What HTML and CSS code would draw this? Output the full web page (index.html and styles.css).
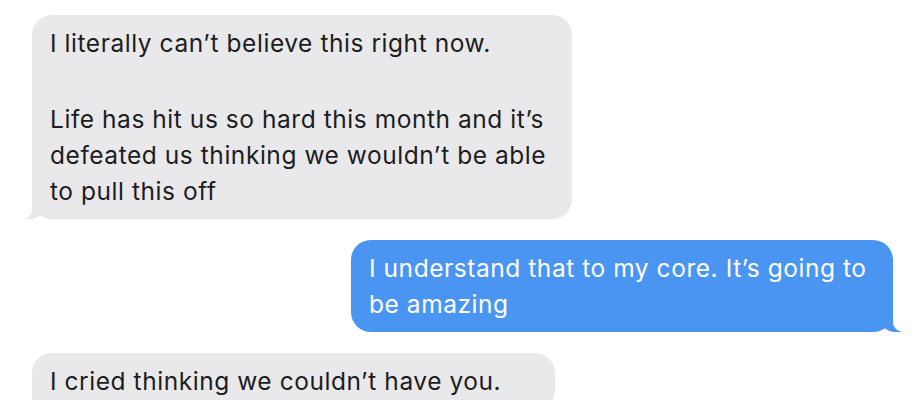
FILE: index.html
```html
<!DOCTYPE html>
<html>
<head>
<meta charset="utf-8">
<link rel="stylesheet" href="styles.css">
</head>
<body>
<div class="thread">
  <div class="bubble received">
    <p class="para">I literally can’t believe this right now.</p>
    <p class="para">Life has hit us so hard this month and it’s defeated us thinking we wouldn’t be able to pull this off</p>
  </div>
  <div class="bubble sent">
    <p class="para">I understand that to my core. It’s going to be amazing</p>
  </div>
  <div class="bubble received narrow">
    <p class="para">I cried thinking we couldn’t have you.</p>
  </div>
</div>
</body>
</html>
```
FILE: styles.css
```css
html, body {
  margin: 0;
  padding: 0;
  background: #ffffff;
  overflow: hidden;
}
.thread {
  display: flex;
  flex-direction: column;
  gap: 21px;
  padding: 15px 31px 0 32px;
  font-family: Inter, "Noto Sans", sans-serif;
  font-size: 24.5px;
  letter-spacing: 0.55px;
  line-height: 36px;
}
.bubble {
  position: relative;
  box-sizing: border-box;
  width: 540px;
  padding: 10px 18px 10px;
  border-radius: 20px;
}
.para {
  margin: 0;
}
.para + .para {
  margin-top: 40px;
}
.received {
  align-self: flex-start;
  background: #e9e9eb;
  color: #1d1d1f;
}
.sent {
  align-self: flex-end;
  width: 542px;
  background: #4b95f2;
  color: #ffffff;
}
.narrow {
  width: 523px;
}
.received::before,
.received::after,
.sent::before,
.sent::after {
  content: "";
  position: absolute;
  bottom: 0;
  height: 22px;
}
.received::before {
  left: -8px;
  width: 22px;
  background: #e9e9eb;
  border-bottom-right-radius: 16px;
}
.received::after {
  left: -12px;
  width: 12px;
  background: #ffffff;
  border-bottom-right-radius: 10px;
}
.sent::before {
  right: -8px;
  width: 22px;
  background: #4b95f2;
  border-bottom-left-radius: 16px;
}
.sent::after {
  right: -12px;
  width: 12px;
  background: #ffffff;
  border-bottom-left-radius: 10px;
}
```
